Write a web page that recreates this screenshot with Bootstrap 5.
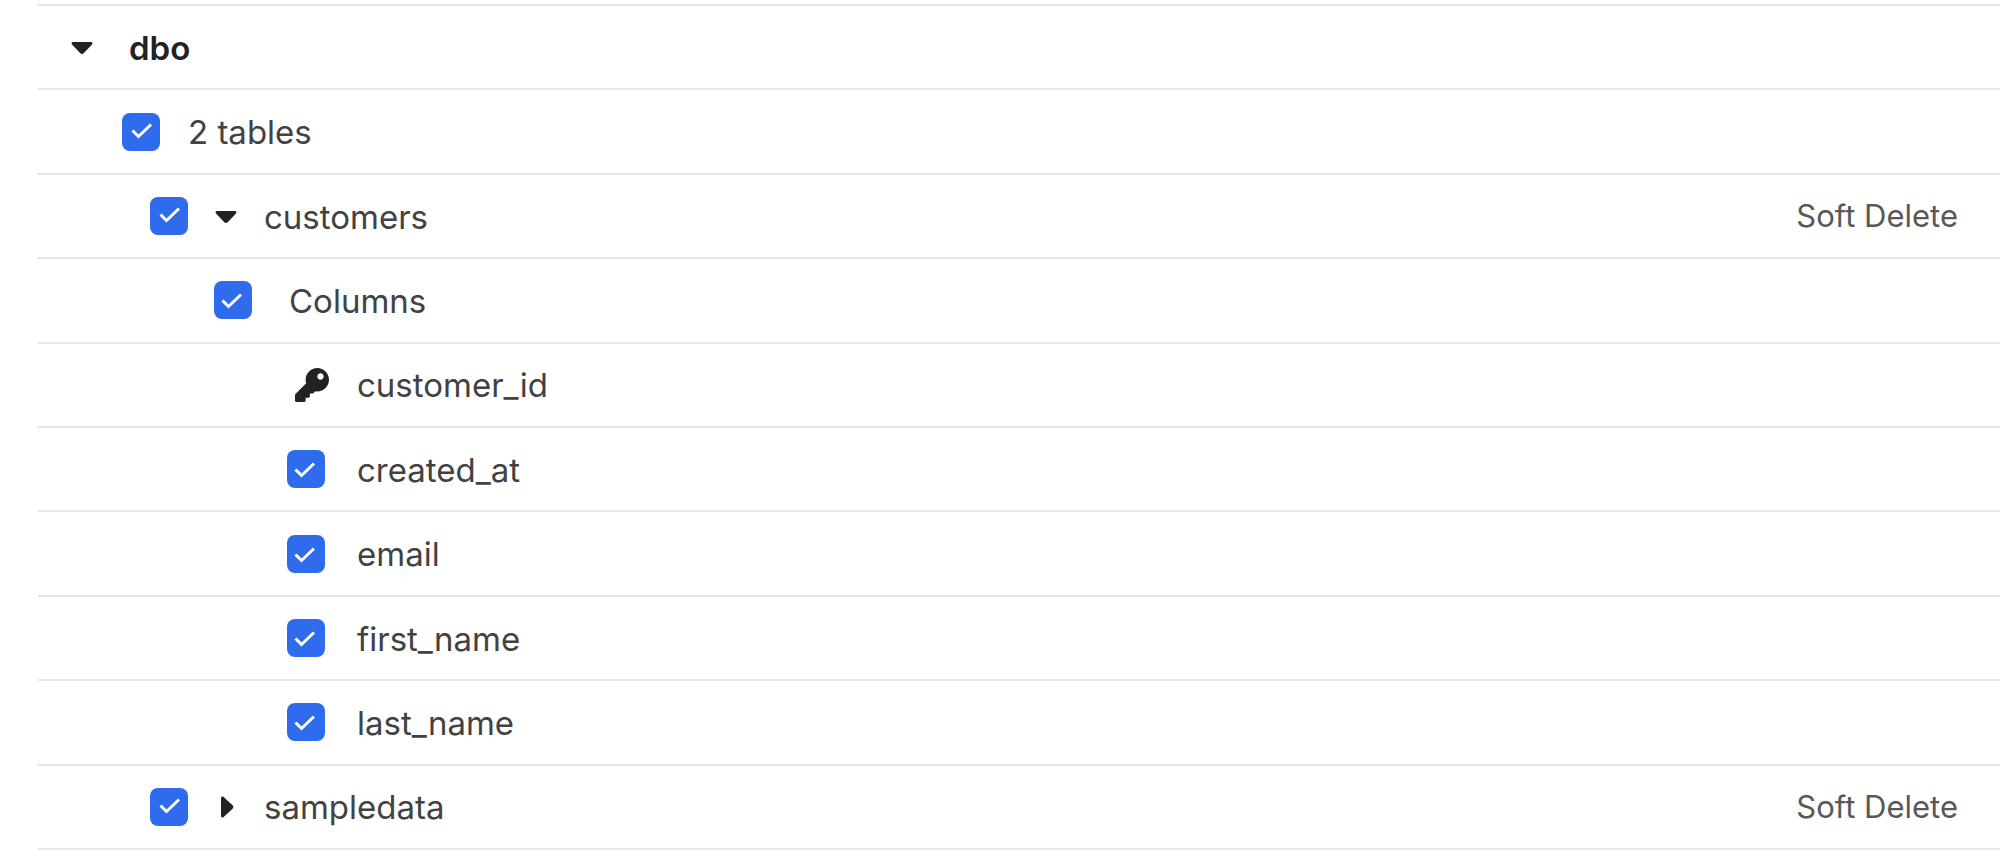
<!DOCTYPE html>
<html lang="en">
<head>
<meta charset="utf-8">
<meta name="viewport" content="width=device-width, initial-scale=1">
<title>Schema selection</title>
<link rel="stylesheet" href="https://cdn.jsdelivr.net/npm/bootstrap@5.3.0/dist/css/bootstrap.min.css">
<style>
  body { font-family: Inter, "Liberation Sans", sans-serif; color: #424242; background: #fff; }
  /* The tree fills the window; its rows share the height evenly */
  .tree { min-height: calc(100vh - 11px); margin: 4px 0 0 38px; border-top: 2px solid #e4e4e9; }
  .tree-row { min-height: 64px; border-bottom: 2px solid #e4e4e9; padding-right: 42px; }
  .tree-text { font-size: 33px; line-height: 40px; padding-top: 1px; }
  .tree-root { font-weight: 600; color: #222; }
  .tree-mode { font-size: 31px; line-height: 40px; color: #585858; }
  .level-0 { padding-left: 30px; }
  .level-1 { padding-left: 84px; }
  .level-2 { padding-left: 112px; }
  .level-3 { padding-left: 176px; }
  .level-4 { padding-left: 249px; }
  .gap-root { gap: 33px; }
  .gap-count { gap: 28px; }
  .gap-table { gap: 24px; }
  .gap-group { gap: 37px; }
  .gap-column { gap: 32px; }
  .gap-key { gap: 28px; }
  .form-check-input.tree-check { width: 38px; height: 38px; margin: 0; border: 0; border-radius: 8px; }
  .form-check-input.tree-check:checked {
    background-color: #2f6bed; background-size: 38px 38px;
    background-image: url("data:image/svg+xml,%3Csvg xmlns='http://www.w3.org/2000/svg' viewBox='0 0 38 38'%3E%3Cpath d='M10.5 17.5l6 6L29 11.5' fill='none' stroke='%23fff' stroke-width='3'/%3E%3C/svg%3E");
  }
  .level-3 .tree-check:checked, .level-4 .tree-check:checked { background-position: -2px 2px; }
  .tree-toggle { width: 28px; height: 28px; color: #222; }
  .key-slot { width: 42px; color: #222; }
</style>
</head>
<body>
<ul class="tree list-unstyled d-flex flex-column">
  <li class="tree-row level-0 gap-root d-flex align-items-center flex-fill">
    <button type="button" class="tree-toggle btn p-0 border-0 d-flex" aria-label="Collapse dbo" aria-expanded="true"><svg width="28" height="28" viewBox="0 0 28 28" fill="currentColor" aria-hidden="true"><path d="M5 9h18c1.400 0 2 1.600 1 2.600l-8.300 8.600c-1 1-2.400 1-3.400 0L4 11.600C3 10.600 3.600 9 5 9z"/></svg></button>
    <span class="tree-text tree-root">dbo</span>
  </li>
  <li class="tree-row level-1 gap-count d-flex align-items-center flex-fill">
    <input class="form-check-input tree-check" type="checkbox" id="all-tables" checked>
    <label class="tree-text" for="all-tables">2 tables</label>
  </li>
  <li class="tree-row level-2 gap-table d-flex align-items-center flex-fill">
    <input class="form-check-input tree-check" type="checkbox" id="customers" checked>
    <button type="button" class="tree-toggle btn p-0 border-0 d-flex" aria-label="Collapse customers" aria-expanded="true"><svg width="28" height="28" viewBox="0 0 28 28" fill="currentColor" aria-hidden="true"><path d="M5 9h18c1.400 0 2 1.600 1 2.600l-8.300 8.600c-1 1-2.400 1-3.400 0L4 11.600C3 10.600 3.600 9 5 9z"/></svg></button>
    <label class="tree-text" for="customers">customers</label>
    <span class="tree-mode ms-auto">Soft Delete</span>
  </li>
  <li class="tree-row level-3 gap-group d-flex align-items-center flex-fill">
    <input class="form-check-input tree-check" type="checkbox" id="columns" checked>
    <label class="tree-text" for="columns">Columns</label>
  </li>
  <li class="tree-row level-4 gap-key d-flex align-items-center flex-fill">
    <span class="key-slot d-flex justify-content-end"><svg width="34" height="34" viewBox="0 0 512 512" fill="currentColor" role="img" aria-label="Primary key"><path d="M512 176c0 97-79 176-176 176-11 0-22-1-33-3l-24 27c-5 5-11 8-18 8h-37v40c0 13-11 24-24 24h-40v40c0 13-11 24-24 24H24c-13 0-24-11-24-24v-78c0-6 3-12 7-17l162-162c-6-17-9-36-9-55C160 79 239 0 336 0c97 0 176 79 176 176zM336 128c0 27 21 48 48 48s48-21 48-48-21-48-48-48-48 21-48 48z"/></svg></span>
    <span class="tree-text">customer_id</span>
  </li>
  <li class="tree-row level-4 gap-column d-flex align-items-center flex-fill">
    <input class="form-check-input tree-check" type="checkbox" id="created-at" checked>
    <label class="tree-text" for="created-at">created_at</label>
  </li>
  <li class="tree-row level-4 gap-column d-flex align-items-center flex-fill">
    <input class="form-check-input tree-check" type="checkbox" id="email" checked>
    <label class="tree-text" for="email">email</label>
  </li>
  <li class="tree-row level-4 gap-column d-flex align-items-center flex-fill">
    <input class="form-check-input tree-check" type="checkbox" id="first-name" checked>
    <label class="tree-text" for="first-name">first_name</label>
  </li>
  <li class="tree-row level-4 gap-column d-flex align-items-center flex-fill">
    <input class="form-check-input tree-check" type="checkbox" id="last-name" checked>
    <label class="tree-text" for="last-name">last_name</label>
  </li>
  <li class="tree-row level-2 gap-table d-flex align-items-center flex-fill">
    <input class="form-check-input tree-check" type="checkbox" id="sampledata" checked>
    <button type="button" class="tree-toggle btn p-0 border-0 d-flex" aria-label="Expand sampledata" aria-expanded="false"><svg width="28" height="28" viewBox="0 0 28 28" fill="currentColor" aria-hidden="true"><path d="M9 5v18c0 1.400 1.600 2 2.600 1l9-8.300c1-1 1-2.400 0-3.400l-9-8.300C10.600 3 9 3.600 9 5z"/></svg></button>
    <label class="tree-text" for="sampledata">sampledata</label>
    <span class="tree-mode ms-auto">Soft Delete</span>
  </li>
</ul>
<script src="https://cdn.jsdelivr.net/npm/bootstrap@5.3.0/dist/js/bootstrap.bundle.min.js"></script>
</body>
</html>
